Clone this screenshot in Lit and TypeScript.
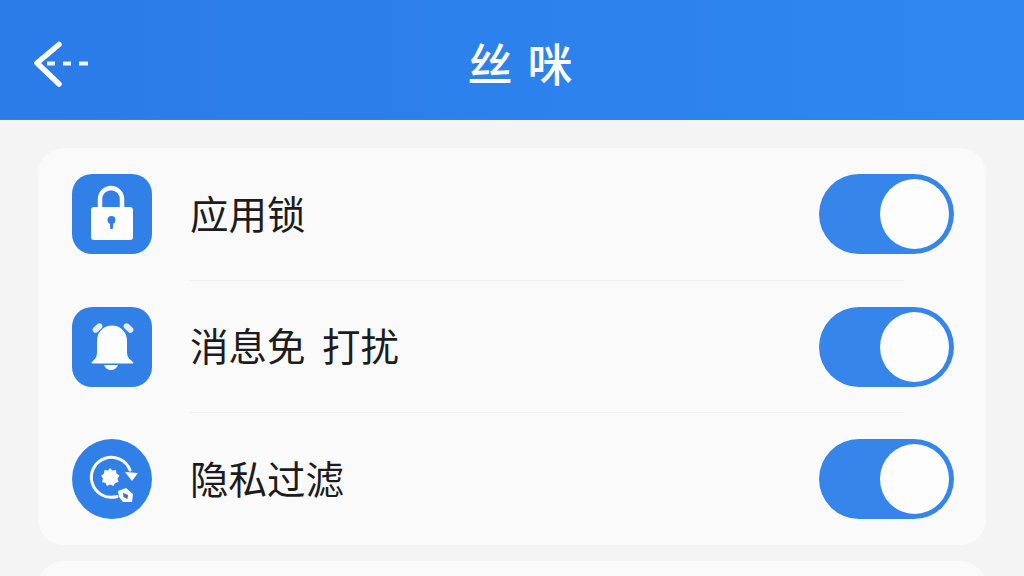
import { LitElement, css, html, svg } from 'lit';
import { customElement, property } from 'lit/decorators.js';

@customElement('toggle-switch')
export class ToggleSwitch extends LitElement {
  @property({ type: Boolean, reflect: true }) on = true;

  static styles = css`
    :host {
      display: block;
      width: 135px;
      height: 80px;
      border-radius: 40px;
      background: #3585ea;
      box-sizing: border-box;
      padding: 5px 5px 5px 61px;
    }
    .knob {
      width: 69px;
      height: 70px;
      border-radius: 50%;
      background: #fdfdfe;
    }
  `;

  render() {
    return html`<div class="knob"></div>`;
  }
}

const lockIcon = svg`
  <path d="M28 36V25a11 11 0 0 1 22 0v11" fill="none" stroke="#fdfdfe" stroke-width="4.500"/>
  <rect x="19" y="33" width="42" height="33" rx="3" fill="#fdfdfe"/>
  <circle cx="39.500" cy="46" r="4" fill="#2f7fe6"/>
  <rect x="38" y="47" width="3" height="8" rx="1.200" fill="#2f7fe6"/>
`;

const bellIcon = svg`
  <path d="M20 56c0-2 5-3 5.500-10V34c0-9 6-15 14.500-15s14.500 6 14.500 15v12c.5 7 6.500 8 6.500 10z" fill="#fdfdfe" stroke="#fdfdfe" stroke-width="1" stroke-linejoin="round"/>
  <path d="M32 58h14c-1 3-4 5-7 5s-6-2-7-5z" fill="#fdfdfe"/>
  <rect x="20" y="18" width="11" height="6" rx="3" transform="rotate(-42 25.500 21)" fill="#e4eefb"/>
  <rect x="51" y="18" width="11" height="6" rx="3" transform="rotate(42 56.500 21)" fill="#e4eefb"/>
`;

const privacyIcon = svg`
  <path d="M58 31A20 20 0 1 0 45 57.500" fill="none" stroke="#fdfdfe" stroke-width="3" stroke-linecap="round"/>
  <path d="M53 33l13 1-6 8z" fill="#fdfdfe"/>
  <path d="M38 29l2.500 2.500 3.500-.5.500 3.500 3 2-2 3 1 3.500-3.500 1-1.500 3-3.500-1.500-3 1.500-1.500-3-3.500-1 1-3.500-2-3 3-2 .5-3.500 3.500.5z" fill="#fdfdfe"/>
  <path d="M46 52l8-3 7 6-1 8-9 0-4-5z" fill="#fdfdfe"/>
  <path d="M51 54l5 2-.5 4-4-2z" fill="#3a6fb5"/>
`;

const rows = [
  { label: '应用锁', icon: lockIcon, round: false },
  { label: '消息免 打扰', icon: bellIcon, round: false },
  { label: '隐私过滤', icon: privacyIcon, round: true },
];

@customElement('app-root')
export class AppRoot extends LitElement {
  static styles = css`
    :host {
      display: block;
      width: 1024px;
      height: 576px;
      overflow: hidden;
      background: #f4f4f5;
      font-family: 'Noto Sans CJK SC', 'Liberation Sans', sans-serif;
    }
    header {
      height: 120px;
      display: flex;
      align-items: center;
      justify-content: center;
      position: relative;
      background: linear-gradient(90deg, #2b7be8, #2f87f0);
      border-bottom: 1px solid #3a7fd8;
      box-sizing: border-box;
      padding: 6px 0 0 16px;
    }
    .back {
      position: absolute;
      left: 32px;
      top: 35px;
    }
    h1 {
      margin: 0;
      display: flex;
      gap: 15px;
      color: #fff;
      font-size: 45px;
      font-weight: 500;
      line-height: 60px;
    }
    main {
      padding: 28px 38px 0;
      display: flex;
      flex-direction: column;
      gap: 16px;
    }
    .card {
      background: #fafafb;
      border-radius: 26px;
      padding: 26px 32px 26px 34px;
    }
    .next {
      height: 80px;
    }
    .row {
      display: flex;
      align-items: center;
      height: 80px;
    }
    .icon {
      width: 80px;
      height: 80px;
      border-radius: 20px;
      background: #3080e8;
      margin-right: 38px;
      flex: none;
    }
    .icon.round {
      border-radius: 50%;
    }
    .icon svg {
      display: block;
    }
    .label {
      flex: 1;
      font-size: 38.500px;
      line-height: 50px;
      padding-bottom: 5px;
      color: #1c1c1e;
      white-space: pre;
      word-spacing: 8px;
    }
    .line {
      height: 1px;
      background: #eff0f2;
      margin: 25.500px 50px 26px 118px;
    }
  `;

  render() {
    return html`
      <header>
        <svg class="back" width="60" height="56" viewBox="0 0 60 56">
          <path d="M27 9.500 L5 28 L27 49" fill="none" stroke="#fff" stroke-width="5.500" stroke-linecap="round" stroke-linejoin="round"/>
          <path d="M15 26.500h8v4h-8zM31 26.500h8v4h-8zM47 26.500h9v4h-9z" fill="#eef5fe"/>
        </svg>
        <h1><span>丝</span><span>咪</span></h1>
      </header>
      <main>
        <section class="card">
          ${rows.map((r, i) => html`
            ${i > 0 ? html`<div class="line"></div>` : ''}
            <div class="row">
              <div class="icon ${r.round ? 'round' : ''}">
                <svg width="80" height="80" viewBox="0 0 80 80">${r.icon}</svg>
              </div>
              <div class="label">${r.label}</div>
              <toggle-switch></toggle-switch>
            </div>
          `)}
        </section>
        <section class="card next"></section>
      </main>
    `;
  }
}
